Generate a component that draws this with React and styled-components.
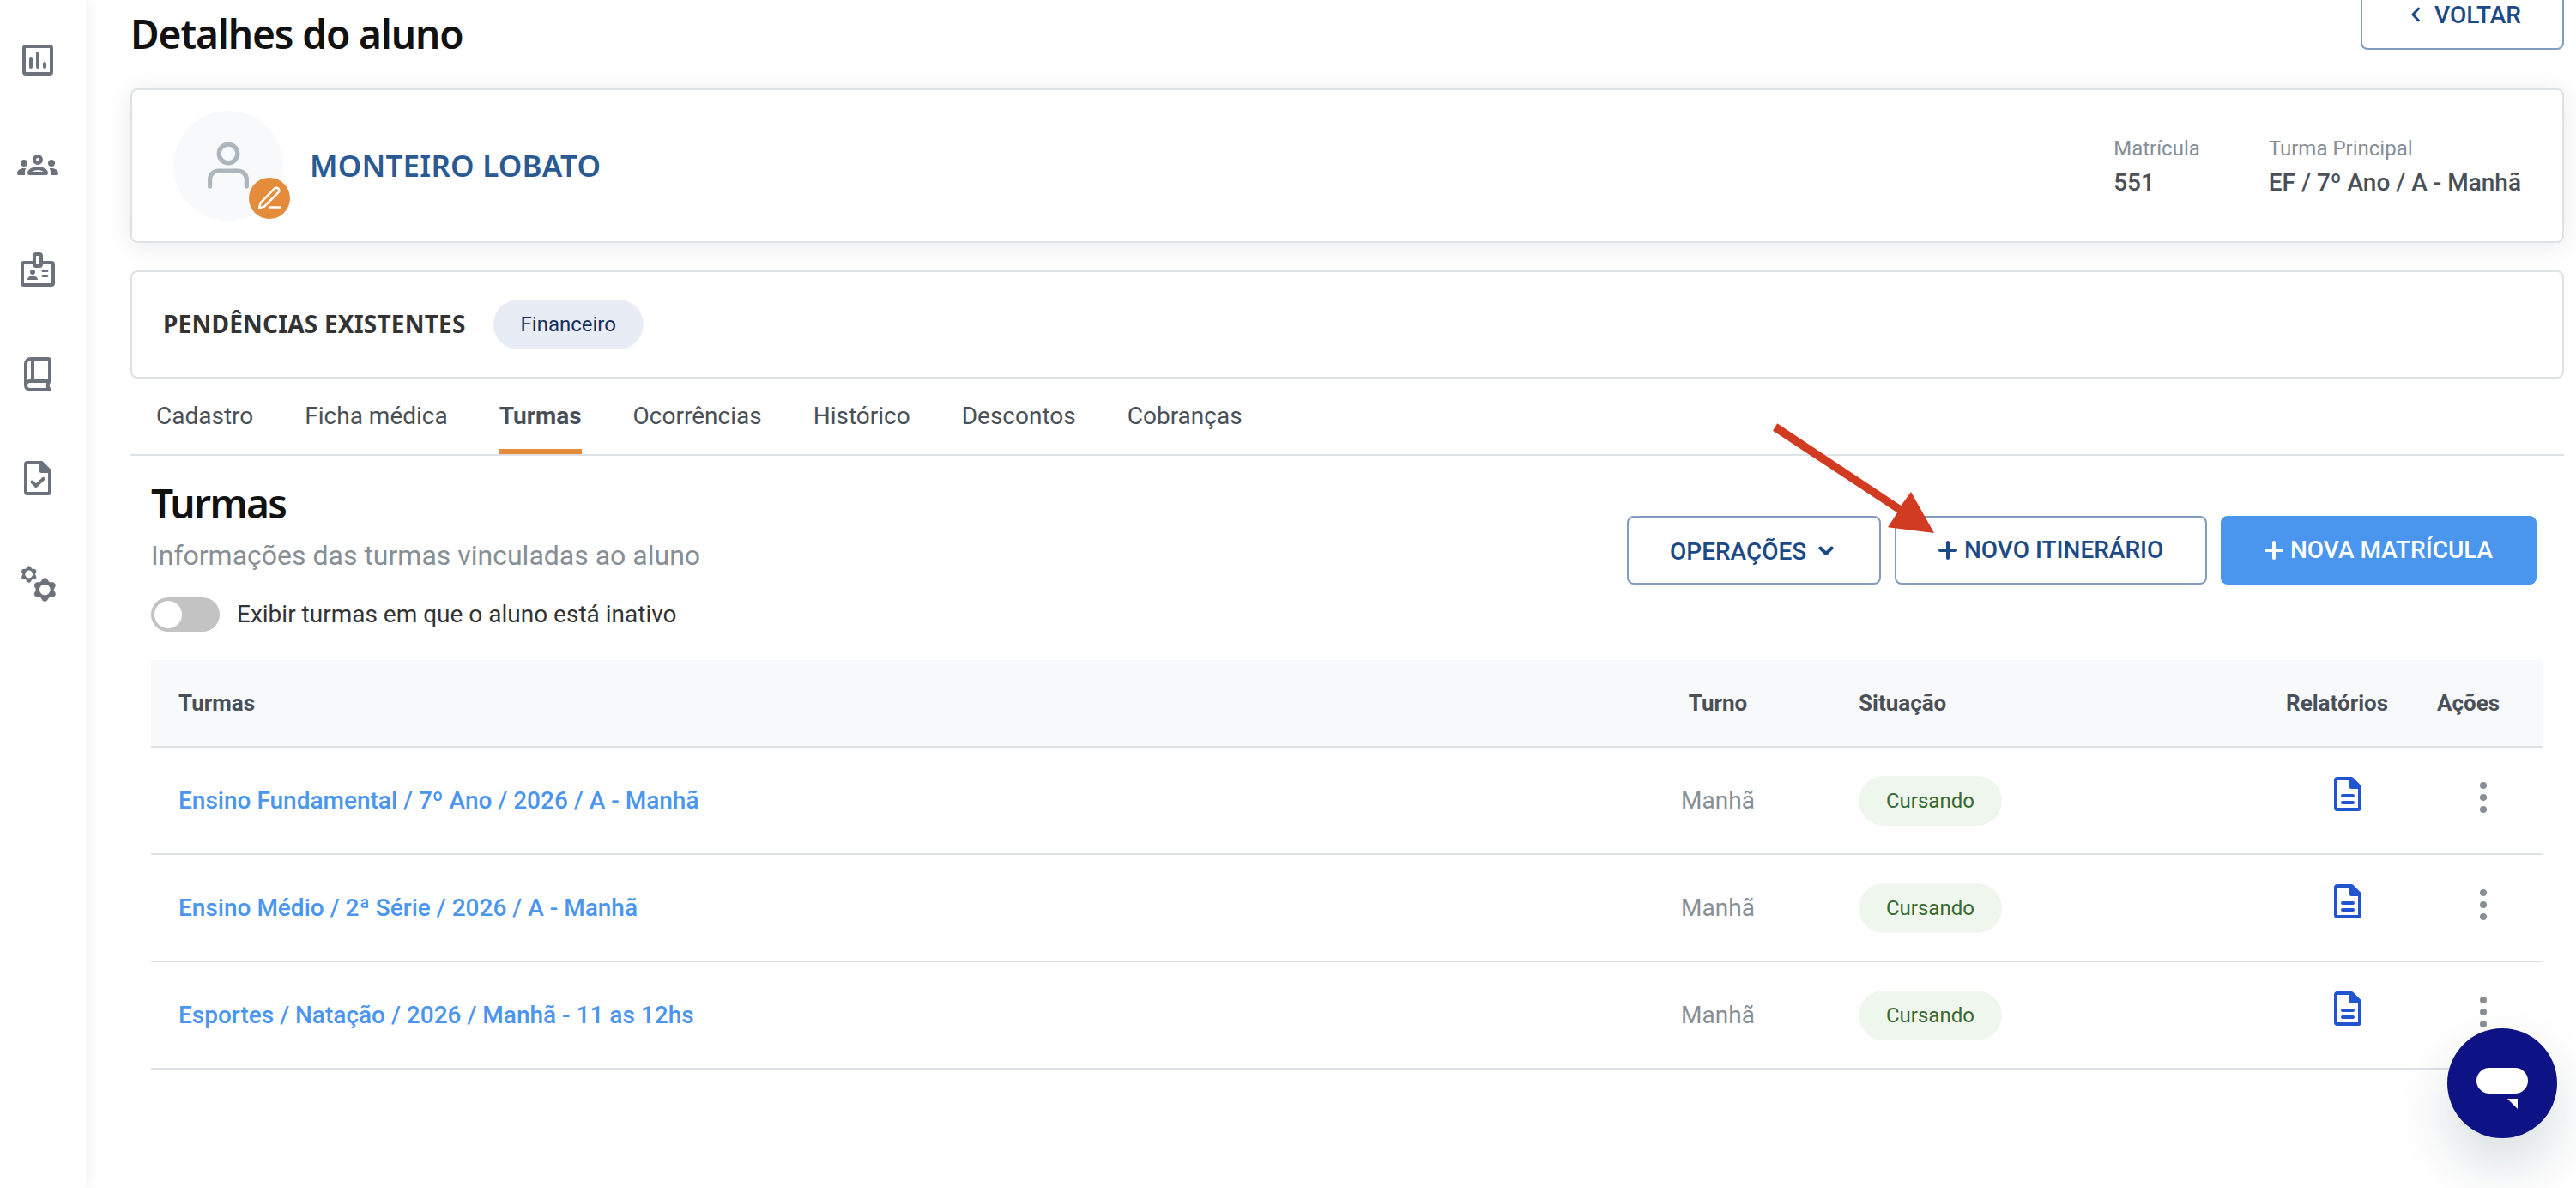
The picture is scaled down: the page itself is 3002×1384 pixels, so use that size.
import React from "react";
import styled, { createGlobalStyle } from "styled-components";

const tabs = [
  "Cadastro",
  "Ficha médica",
  "Turmas",
  "Ocorrências",
  "Histórico",
  "Descontos",
  "Cobranças",
];

const classes = [
  { name: "Ensino Fundamental / 7º Ano / 2026 / A - Manhã", shift: "Manhã", status: "Cursando" },
  { name: "Ensino Médio / 2ª Série / 2026 / A - Manhã", shift: "Manhã", status: "Cursando" },
  { name: "Esportes / Natação / 2026 / Manhã - 11 as 12hs", shift: "Manhã", status: "Cursando" },
];

const ChartIcon = () => (
  <Icon viewBox="0 0 48 48">
    <rect x="8" y="8" width="32" height="32" rx="2" />
    <path d="M16 22v10M24 16v16M32 28v4" strokeLinecap="round" />
  </Icon>
);

const GroupsIcon = () => (
  <Icon viewBox="0 0 48 48">
    <circle cx="24" cy="18" r="4" />
    <path d="M14 33.5c0-2.6 4.5-5.5 10-5.5s10 2.9 10 5.5c0 .4-.2.5-.6.5H14.600c-.4 0-.6-.1-.6-.5Z" />
    <g fill="currentColor" stroke="none">
      <circle cx="8" cy="22" r="4" />
      <circle cx="40" cy="22" r="4" />
      <path d="M10.200 28.200C9 30 9 32 9 36H2c-1.200 0-2-.8-2-2 0-3.800 3.500-6 8-6 .8 0 1.500 0 2.200.2Z" />
      <path d="M37.800 28.200C39 30 39 32 39 36h7c1.200 0 2-.8 2-2 0-3.800-3.500-6-8-6-.8 0-1.500 0-2.200.2Z" />
    </g>
  </Icon>
);

const BadgeIcon = () => (
  <Icon viewBox="0 0 48 48">
    <path d="M19 16H8a2 2 0 0 0-2 2v22a2 2 0 0 0 2 2h32a2 2 0 0 0 2-2V18a2 2 0 0 0-2-2H29" />
    <rect x="20" y="6" width="8" height="14" rx="2" />
    <path d="M30 25.500h5M30 31.500h5" strokeWidth="3" strokeLinecap="round" />
    <g fill="currentColor" stroke="none">
      <circle cx="18" cy="27" r="3" />
      <path d="M12 36c0-3 2.600-4.500 6-4.500s6 1.500 6 4.500Z" />
    </g>
  </Icon>
);

const BookIcon = () => (
  <Icon viewBox="0 0 48 48">
    <path d="M10 37V12a6 6 0 0 1 6-6h20a2 2 0 0 1 2 2v24H15a5 5 0 0 0 0 10h23" strokeLinecap="round" strokeLinejoin="round" />
    <path d="M18 6v26M37.500 32.500c-2.500 3-2.500 6 0 9" />
  </Icon>
);

const FileCheckIcon = () => (
  <Icon viewBox="0 0 48 48">
    <path d="M28.500 6H12a2 2 0 0 0-2 2v32a2 2 0 0 0 2 2h24a2 2 0 0 0 2-2V15.500Z" strokeLinejoin="round" />
    <path d="M26 5h3l10 10v3H28a2 2 0 0 1-2-2Z" fill="currentColor" stroke="none" />
    <path d="m17.500 28.500 4.400 4.400 8.600-8" strokeLinecap="round" />
  </Icon>
);

const DocIcon = () => (
  <Icon viewBox="0 0 48 48">
    <path d="M28.500 6H12a2 2 0 0 0-2 2v32a2 2 0 0 0 2 2h24a2 2 0 0 0 2-2V15.500Z" strokeLinejoin="round" />
    <path d="M26 5h3l10 10v3H28a2 2 0 0 1-2-2Z" fill="currentColor" stroke="none" />
    <path d="M18 26h12M18 34h12" strokeLinecap="round" />
  </Icon>
);

const Gear = ({ x, y, scale }) => (
  <g transform={`translate(${x} ${y}) scale(${scale})`}>
    <circle r="8.400" strokeWidth="4.200" />
    {[0, 60, 120, 180, 240, 300].map((angle) => (
      <path
        key={angle}
        transform={`rotate(${angle})`}
        d="M-4.600-9.200-2.600-12.400Q0-14.800 2.600-12.400L4.600-9.200Z"
        fill="currentColor"
        stroke="currentColor"
        strokeWidth="0.500"
      />
    ))}
  </g>
);

const GearsIcon = () => (
  <Icon viewBox="0 0 48 48">
    <Gear x={13.7} y={14} scale={0.7} />
    <Gear x={32.3} y={32} scale={1} />
  </Icon>
);

const UserIcon = () => (
  <Icon viewBox="0 0 48 56">
    <circle cx="24" cy="14" r="10.800" strokeWidth="5.200" />
    <path d="M2.600 52v-8a10 10 0 0 1 10-10h22.800a10 10 0 0 1 10 10v8" strokeWidth="5.200" strokeLinecap="round" />
  </Icon>
);

const PencilIcon = () => (
  <Icon viewBox="0 0 48 48">
    <path
      d="M12.200 35.200 13.400 29.600 29.800 12.600a3.200 3.200 0 0 1 4.600 4.600L18 33.600Z"
      strokeWidth="2.500"
      strokeLinejoin="round"
    />
    <path d="M24 34.600h12.800" strokeWidth="2.500" strokeLinecap="round" />
  </Icon>
);

const PlusIcon = () => (
  <SmallIcon $width={22} viewBox="0 0 22 22">
    <path d="M11 2v18M2 11h18" />
  </SmallIcon>
);

const App = () => {
  return (
    <Page>
      <GlobalStyle />
      <Sidebar>
        {[ChartIcon, GroupsIcon, BadgeIcon, BookIcon, FileCheckIcon, GearsIcon].map((Item, i) => (
          <SideLink key={i}>
            <Item />
          </SideLink>
        ))}
      </Sidebar>
      <Main>
        <Header>
          <h1>Detalhes do aluno</h1>
          <BackButton>
            <SmallIcon $width={12} viewBox="0 0 12 20">
              <path d="M9.500 3 3 10l6.500 7" strokeWidth="3" />
            </SmallIcon>
            VOLTAR
          </BackButton>
        </Header>
        <StudentCard>
          <Avatar>
            <UserIcon />
            <EditBadge>
              <PencilIcon />
            </EditBadge>
          </Avatar>
          <StudentName>MONTEIRO LOBATO</StudentName>
          <Info>
            <span>Matrícula</span>
            <strong>551</strong>
          </Info>
          <Info>
            <span>Turma Principal</span>
            <strong>EF / 7º Ano / A - Manhã</strong>
          </Info>
        </StudentCard>
        <Pending>
          <h3>PENDÊNCIAS EXISTENTES</h3>
          <Chip $color="#172f5b" $bg="#e8ecf4">
            Financeiro
          </Chip>
        </Pending>
        <Tabs>
          {tabs.map((tab) => (
            <Tab key={tab} $active={tab === "Turmas"}>
              {tab}
            </Tab>
          ))}
        </Tabs>
        <Section>
          <SectionHead>
            <div>
              <h2>Turmas</h2>
              <p>Informações das turmas vinculadas ao aluno</p>
              <ToggleRow>
                <Toggle />
                <label>Exibir turmas em que o aluno está inativo</label>
              </ToggleRow>
            </div>
            <Actions>
              <Button $width={296} $drop>
                OPERAÇÕES
                <SmallIcon $width={18} $left={14} viewBox="0 0 18 12">
                  <path d="m2.500 2.500 6.500 6.500 6.500-6.500" />
                </SmallIcon>
              </Button>
              <Button $width={364}>
                <PlusIcon />
                NOVO ITINERÁRIO
              </Button>
              <Button $width={368} $primary>
                <PlusIcon />
                NOVA MATRÍCULA
              </Button>
            </Actions>
          </SectionHead>
          <HeadRow>
            <span>Turmas</span>
            <ShiftCell>Turno</ShiftCell>
            <StatusCell>Situação</StatusCell>
            <span>Relatórios</span>
            <span>Ações</span>
          </HeadRow>
          {classes.map((item) => (
            <Row key={item.name}>
              <ClassLink>{item.name}</ClassLink>
              <ShiftCell>{item.shift}</ShiftCell>
              <StatusCell>
                <Chip $color="#376a34" $bg="#eff6ee">
                  {item.status}
                </Chip>
              </StatusCell>
              <ReportCell>
                <DocIcon />
              </ReportCell>
              <MenuCell>
                <i />
                <i />
                <i />
              </MenuCell>
            </Row>
          ))}
        </Section>
      </Main>
      <Arrow viewBox="0 0 192 132">
        <path d="M7.200 1.300 151.400 97 163 81 190 129 136 122.300 147 105.300 2 9.700Z" />
      </Arrow>
      <ChatButton>
        <svg viewBox="0 0 60 48">
          <rect width="60" height="30" rx="15" />
          <path d="M36 36h12v12Z" />
        </svg>
      </ChatButton>
    </Page>
  );
};

const GlobalStyle = createGlobalStyle`
  * {
    box-sizing: border-box;
  }
  body {
    margin: 0;
    background: #fff;
    font-family: Roboto, "Liberation Sans", sans-serif;
    font-size: 28px;
    color: #495057;
  }
  h1, h2, h3, p {
    margin: 0;
  }
`;

const Icon = styled.svg`
  display: block;
  width: 48px;
  flex-shrink: 0;
  fill: none;
  stroke: currentColor;
  stroke-width: 4;
`;

const SmallIcon = styled.svg`
  width: ${(props) => props.$width}px;
  margin-left: ${(props) => props.$left || 0}px;
  flex-shrink: 0;
  fill: none;
  stroke: currentColor;
  stroke-width: 4;
  stroke-linecap: round;
  stroke-linejoin: round;
`;

const Page = styled.div`
  position: relative;
  display: flex;
  height: 1384px;
  overflow: hidden;
`;

const Sidebar = styled.nav`
  width: 100px;
  flex-shrink: 0;
  padding: 46.2px 0 0 20px;
  background: #fff;
  box-shadow: 0 0 20px rgba(0, 0, 0, 0.08);
  color: #6c727c;
`;

const SideLink = styled.div`
  height: 121.8px;
`;

const Main = styled.main`
  flex: 1;
  padding: 0 14px 0 52px;
`;

const Header = styled.header`
  display: flex;
  justify-content: space-between;
  height: 80px;
  margin-top: -22px;
  h1 {
    margin-top: 29px;
    font: 600 46px/64px "Noto Sans", sans-serif;
    letter-spacing: -1.1px;
    color: #111;
  }
`;

const BackButton = styled.button`
  display: flex;
  align-items: center;
  gap: 16px;
  width: 237px;
  height: 80px;
  padding: 0 0 2px 56px;
  border: 2px solid #809dbf;
  border-radius: 8px;
  background: #fff;
  font: 500 28px Roboto, sans-serif;
  color: #1c4a86;
`;

const StudentCard = styled.section`
  display: flex;
  align-items: center;
  height: 180px;
  margin-top: 45px;
  padding: 0 48px;
  border: 2px solid #dee2e6;
  border-radius: 8px;
  background: #fff;
  box-shadow: 0 4px 30px rgba(0, 0, 0, 0.09);
`;

const Avatar = styled.div`
  position: relative;
  display: flex;
  align-items: flex-start;
  justify-content: center;
  width: 128px;
  height: 128px;
  padding-top: 36px;
  border-radius: 50%;
  background: #f8f9fb;
  color: #adb5bd;
`;

const EditBadge = styled.div`
  position: absolute;
  right: -8px;
  bottom: 2px;
  border-radius: 50%;
  background: #e58b3c;
  color: #fff;
`;

const StudentName = styled.div`
  flex: 1;
  padding: 0 0 2px 31px;
  font: 600 35px "Noto Sans", sans-serif;
  letter-spacing: 0.2px;
  color: #2a5a93;
`;

const Info = styled.div`
  margin: -1px 0 0 80px;
  line-height: 40px;
  span {
    display: block;
    font-size: 24px;
    color: #868e96;
  }
  strong {
    font-weight: 500;
  }
`;

const Pending = styled.section`
  display: flex;
  align-items: center;
  gap: 32px;
  height: 126px;
  margin-top: 32px;
  padding-left: 36px;
  border: 2px solid #dee2e6;
  border-radius: 8px;
  h3 {
    padding-bottom: 2px;
    font: 700 28px "Noto Sans", sans-serif;
    letter-spacing: 0.2px;
    color: #333;
  }
`;

const Chip = styled.span`
  display: inline-block;
  padding: 0 32px;
  border-radius: 29px;
  background: ${(props) => props.$bg};
  font-size: 24px;
  line-height: 58px;
  color: ${(props) => props.$color};
`;

const Tabs = styled.nav`
  display: flex;
  gap: 60px;
  height: 90px;
  padding-left: 30px;
  border-bottom: 2px solid #dee2e6;
`;

const Tab = styled.span`
  height: 88px;
  border-bottom: ${(props) => (props.$active ? "6px solid #e58b3c" : "0")};
  font-weight: ${(props) => (props.$active ? 700 : 400)};
  line-height: 87px;
`;

const Section = styled.section`
  padding: 0 24px;
`;

const SectionHead = styled.div`
  display: flex;
  justify-content: space-between;
  height: 238px;
  h2 {
    margin-top: 23px;
    font: 600 46px/64px "Noto Sans", sans-serif;
    letter-spacing: -1.6px;
    color: #111;
  }
  p {
    margin-top: 9px;
    font-size: 32px;
    line-height: 40px;
    color: #868e96;
  }
`;

const ToggleRow = styled.div`
  display: flex;
  align-items: center;
  gap: 20px;
  height: 40px;
  margin-top: 29px;
  color: #333;
  label {
    padding-bottom: 2px;
  }
`;

const Toggle = styled.span`
  width: 80px;
  height: 40px;
  padding: 4px;
  border-radius: 20px;
  background: #c3c3c3;
  &::before {
    content: "";
    display: block;
    width: 32px;
    height: 32px;
    border-radius: 50%;
    background: #fff;
  }
`;

const Actions = styled.div`
  display: flex;
  gap: 16px;
  margin: 70px 8px 0 0;
`;

const Button = styled.button`
  display: flex;
  align-items: center;
  gap: ${(props) => (props.$drop ? 0 : 8)}px;
  width: ${(props) => props.$width}px;
  height: 80px;
  padding: ${(props) => (props.$drop ? "2px 0 0 48px" : "0 0 1px 49px")};
  border: 2px solid ${(props) => (props.$primary ? "#4a95ee" : "#809dbf")};
  border-radius: 8px;
  background: ${(props) => (props.$primary ? "#4a95ee" : "#fff")};
  font: 500 28px Roboto, sans-serif;
  white-space: nowrap;
  color: ${(props) => (props.$primary ? "#fff" : "#1c4a86")};
`;

const Row = styled.div`
  display: grid;
  grid-template-columns: 1728px 132px 596px 176px 1fr;
  align-items: center;
  height: 125px;
  padding-left: 32px;
  border-bottom: 2px solid #dee2e6;
`;

const HeadRow = styled(Row)`
  height: 102px;
  background: #f8f9fb;
  font-size: 26px;
  font-weight: 700;
`;

const ClassLink = styled.a`
  font-weight: 500;
  color: #4a95ee;
`;

const ShiftCell = styled.span`
  text-align: center;
  ${Row}:not(${HeadRow}) & {
    color: #868e96;
  }
`;

const StatusCell = styled.span`
  padding-left: 98px;
`;

const ReportCell = styled.span`
  padding: 0 0 15px 48px;
  color: #2154cf;
`;

const MenuCell = styled.span`
  display: grid;
  gap: 6px;
  padding: 0 0 7px 50px;
  i {
    width: 8px;
    height: 8px;
    border-radius: 50%;
    background: #868e96;
  }
`;

// hint arrow that lies over the tabs and the action buttons
const Arrow = styled.svg`
  position: absolute;
  left: 2064px;
  top: 492px;
  width: 192px;
  fill: #d13b22;
`;

const ChatButton = styled.button`
  position: absolute;
  right: 22px;
  bottom: 58px;
  display: flex;
  justify-content: center;
  width: 128px;
  height: 128px;
  padding: 46px 0 0;
  border: 0;
  border-radius: 50%;
  background: #0d1384;
  box-shadow: 0 32px 64px rgba(15, 45, 55, 0.16);
  svg {
    width: 60px;
    height: 48px;
    fill: #fff;
  }
`;

export default App;
